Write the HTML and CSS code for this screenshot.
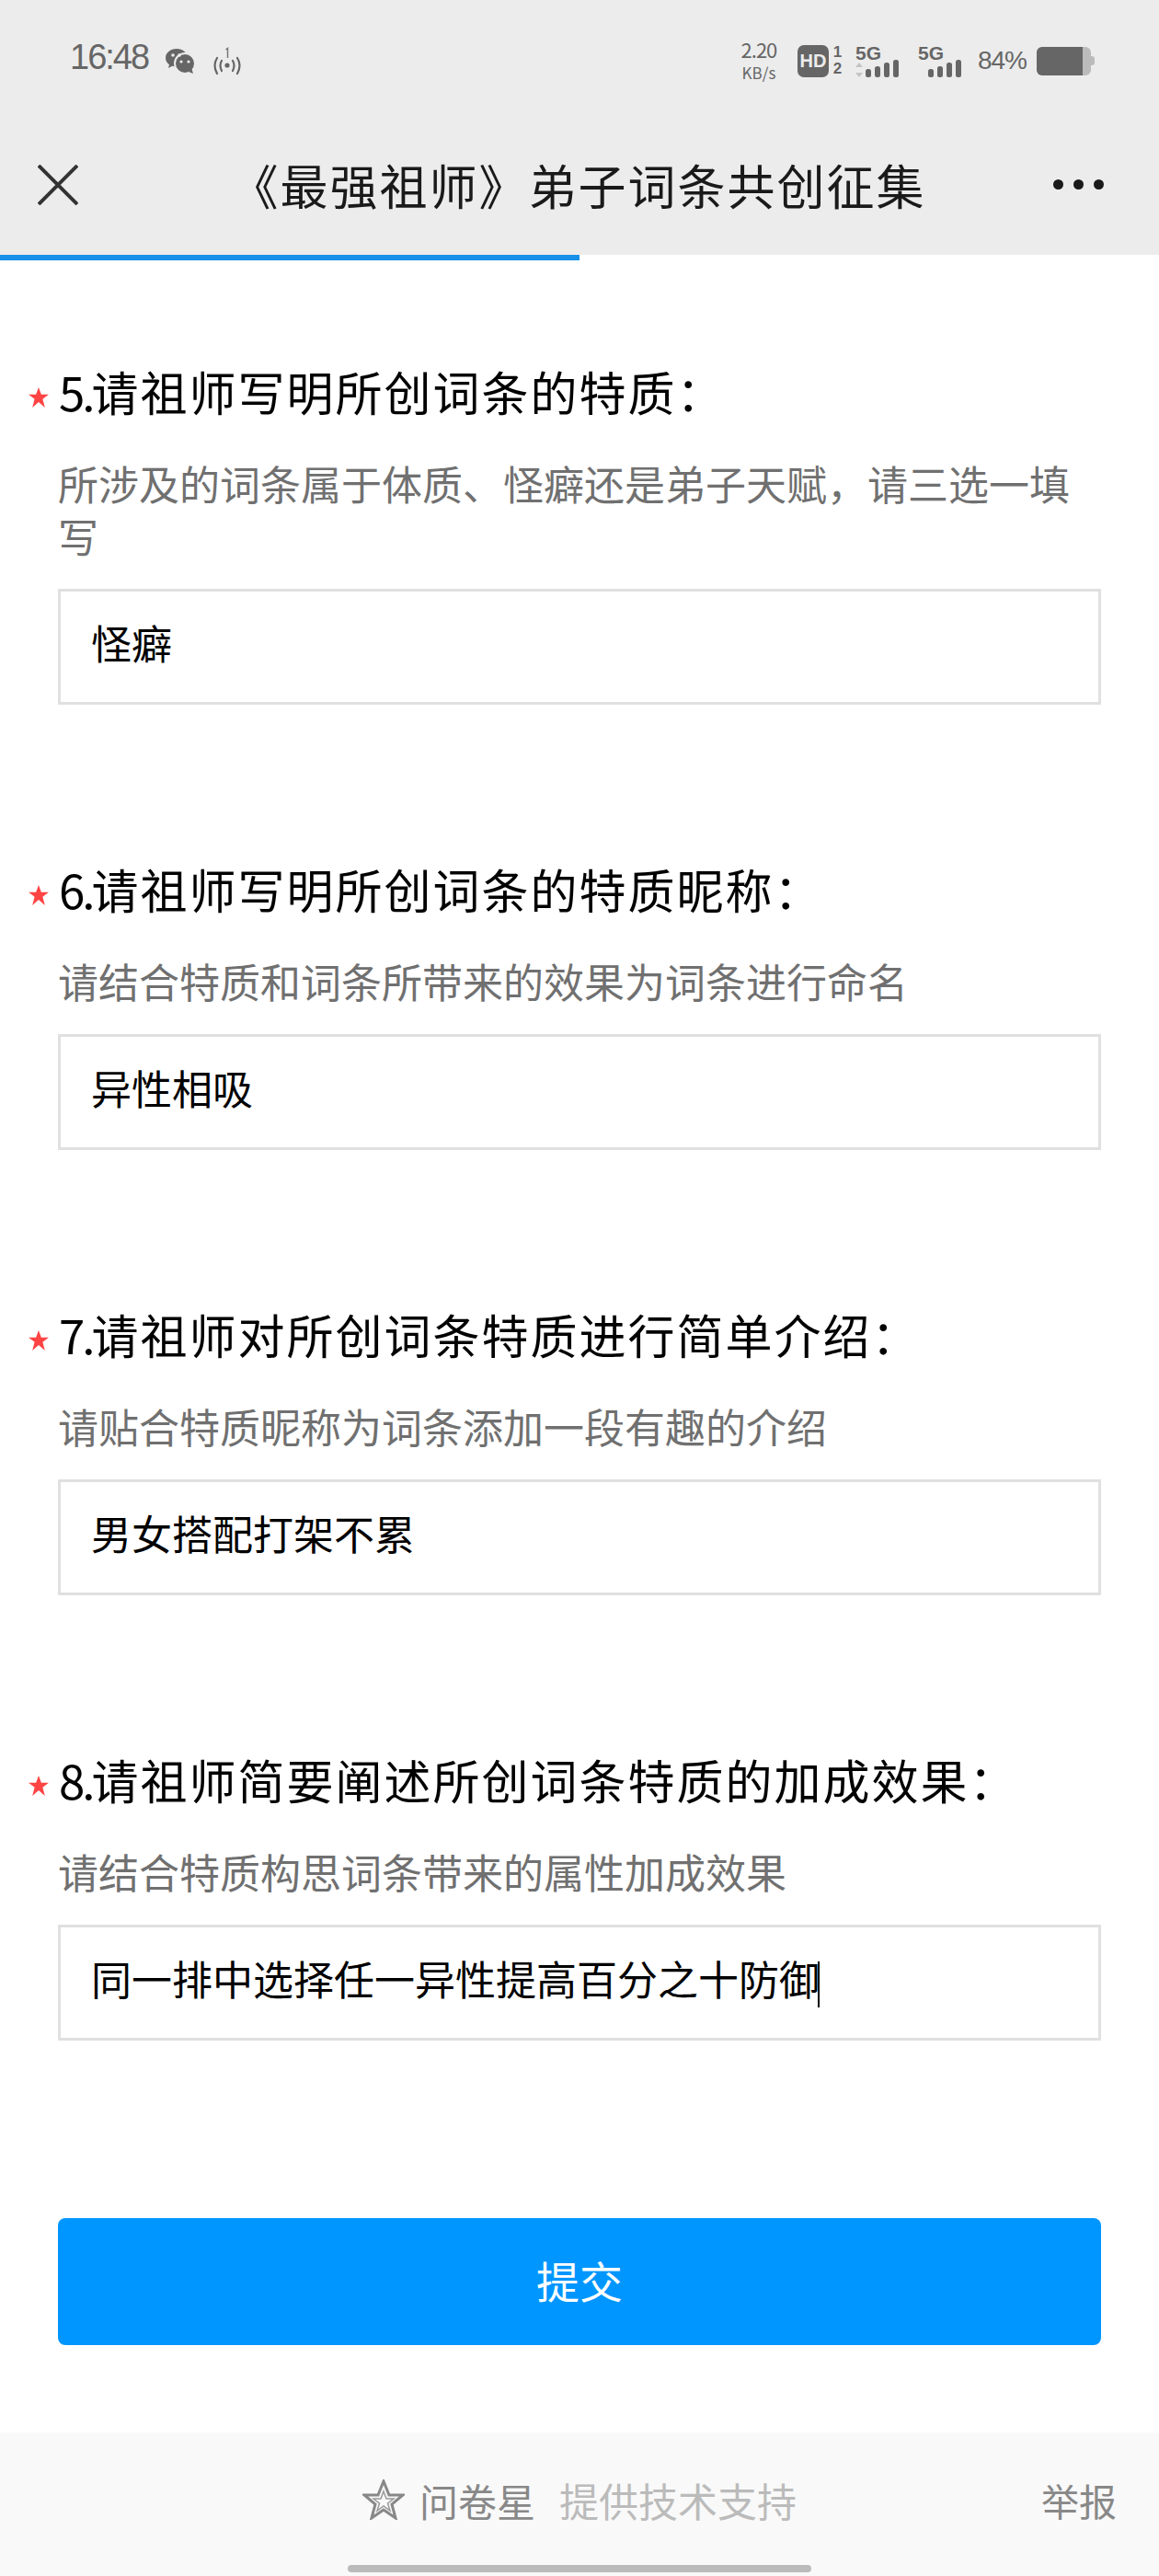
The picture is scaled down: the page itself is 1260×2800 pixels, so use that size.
FILE: index.html
```html
<!DOCTYPE html>
<html lang="zh-CN">
<head>
    <meta charset="UTF-8">
    <meta name="viewport" content="width=device-width, initial-scale=1.0">
    <title>《最强祖师》弟子词条共创征集</title>
    <link rel="stylesheet" href="styles.css">
</head>
<body>
    <header class="top">
        <div class="status">
            <div class="status-left">
                <span class="time">16:48</span>
                <svg class="icon-wechat" width="34" height="28" viewBox="0 0 34 28">
                    <path d="M13 1C6 1 1 5.500 1 11c0 3 1.500 5.500 4 7.300L4 22l4.300-2.200c1.500.4 3 .6 4.700.6 7 0 12-4.300 12-9.400S20 1 13 1z" fill="#666"/>
                    <circle cx="22" cy="17" r="11" fill="#666" stroke="#ececec" stroke-width="2"/>
                    <path d="M26 26l5 2-1.500-5z" fill="#666"/>
                    <circle cx="9" cy="8" r="1.800" fill="#ececec"/>
                    <circle cx="16" cy="8" r="1.800" fill="#ececec"/>
                    <circle cx="18" cy="15" r="1.600" fill="#ececec"/>
                    <circle cx="26" cy="15" r="1.600" fill="#ececec"/>
                </svg>
                <svg class="icon-hotspot" width="38" height="34" viewBox="0 0 38 34">
                    <path d="M8 12q-5 8 0 17M13 15q-3 5 0 11M30 12q5 8 0 17M25 15q3 5 0 11" fill="none" stroke="#666" stroke-width="2.200" stroke-linecap="round"/>
                    <circle cx="19" cy="20" r="2.600" fill="#666"/>
                    <path d="M17.500 3l2-1.500V12" fill="none" stroke="#777" stroke-width="1.500"/>
                </svg>
            </div>
            <div class="status-right">
                <div class="speed"><span>2.20</span><span class="speed-unit">KB/s</span></div>
                <div class="hd">HD</div>
                <div class="sim"><span>1</span><span>2</span></div>
                <svg class="icon-signal first" width="53" height="40" viewBox="0 0 53 40">
                    <text x="0" y="20" class="net-label">5G</text>
                    <path d="M4 23l4 5H0zM4 39l4-5H0z" fill="#c4c4c4"/>
                    <rect x="11" y="30" width="6" height="9" rx="2.500" fill="#666"/>
                    <rect x="21" y="27" width="6" height="12" rx="2.500" fill="#666"/>
                    <rect x="31" y="23" width="6" height="16" rx="2.500" fill="#666"/>
                    <rect x="41" y="20" width="6" height="19" rx="2.500" fill="#666"/>
                </svg>
                <svg class="icon-signal" width="53" height="40" viewBox="0 0 53 40">
                    <text x="0" y="20" class="net-label">5G</text>
                    <rect x="11" y="30" width="6" height="9" rx="2.500" fill="#666"/>
                    <rect x="21" y="27" width="6" height="12" rx="2.500" fill="#666"/>
                    <rect x="31" y="23" width="6" height="16" rx="2.500" fill="#666"/>
                    <rect x="41" y="20" width="6" height="19" rx="2.500" fill="#666"/>
                </svg>
                <span class="percent">84%</span>
                <div class="battery"><div class="battery-level"></div></div>
            </div>
        </div>
        <nav class="nav">
            <svg class="icon-close" width="44" height="44" viewBox="0 0 44 44">
                <path d="M1 1l42 42M43 1L1 43" fill="none" stroke="#333" stroke-width="4"/>
            </svg>
            <h1 class="nav-title">《最强祖师》弟子词条共创征集</h1>
            <div class="nav-more"><i></i><i></i><i></i></div>
        </nav>
    </header>
    <div class="progress"></div>

    <main class="form">
        <section class="question">
            <h2 class="q-title"><svg class="star" width="22" height="22" viewBox="0 0 20 20"><path d="M10 0l2.600 7H20l-6 4.500L16.200 20 10 14.600 3.800 20 6 11.500 0 7h7.400z"/></svg><span class="q-num">5.</span>请祖师写明所创词条的特质：</h2>
            <p class="q-hint">所涉及的词条属于体质、怪癖还是弟子天赋，请三选一填写</p>
            <div class="answer">怪癖</div>
        </section>
        <section class="question">
            <h2 class="q-title"><svg class="star" width="22" height="22" viewBox="0 0 20 20"><path d="M10 0l2.600 7H20l-6 4.500L16.200 20 10 14.600 3.800 20 6 11.500 0 7h7.400z"/></svg><span class="q-num">6.</span>请祖师写明所创词条的特质昵称：</h2>
            <p class="q-hint">请结合特质和词条所带来的效果为词条进行命名</p>
            <div class="answer">异性相吸</div>
        </section>
        <section class="question">
            <h2 class="q-title"><svg class="star" width="22" height="22" viewBox="0 0 20 20"><path d="M10 0l2.600 7H20l-6 4.500L16.200 20 10 14.600 3.800 20 6 11.500 0 7h7.400z"/></svg><span class="q-num">7.</span>请祖师对所创词条特质进行简单介绍：</h2>
            <p class="q-hint">请贴合特质昵称为词条添加一段有趣的介绍</p>
            <div class="answer">男女搭配打架不累</div>
        </section>
        <section class="question">
            <h2 class="q-title"><svg class="star" width="22" height="22" viewBox="0 0 20 20"><path d="M10 0l2.600 7H20l-6 4.500L16.200 20 10 14.600 3.800 20 6 11.500 0 7h7.400z"/></svg><span class="q-num">8.</span>请祖师简要阐述所创词条特质的加成效果：</h2>
            <p class="q-hint">请结合特质构思词条带来的属性加成效果</p>
            <div class="answer">同一排中选择任一异性提高百分之十防御<span class="caret"></span></div>
        </section>
        <button class="submit">提交</button>
    </main>

    <footer class="footer">
        <div></div>
        <div class="brand">
            <svg class="icon-star" width="46" height="44" viewBox="0 0 46 44">
                <path d="M23 2l6 15h15L32 27l4 15-13-9-13 9 4-15L2 17h15z" fill="none" stroke="#888" stroke-width="3"/>
                <path d="M23 13l3 8h8l-6.500 5 2.500 8-7-5-7 5 2.500-8L12 21h8z" fill="none" stroke="#999" stroke-width="1.500"/>
            </svg>
            <span class="brand-name">问卷星</span>
            <span class="brand-note">提供技术支持</span>
        </div>
        <a class="report">举报</a>
    </footer>
    <div class="home-bar"></div>
</body>
</html>
```

FILE: styles.css
```css
* {
    box-sizing: border-box;
}

body {
    margin: 0;
    width: 1260px;
    height: 2800px;
    overflow: hidden;
    background: #fff;
    font-family: "Noto Sans CJK SC", "Liberation Sans", sans-serif;
}

.top {
    height: 277px;
    background: #ececec;
}

.status {
    height: 124px;
    display: flex;
    align-items: center;
    justify-content: space-between;
    padding: 8px 74px 0 76px;
    color: #666;
}

.status-left,
.status-right {
    display: flex;
    align-items: center;
}

.time {
    font-family: "Liberation Sans", sans-serif;
    font-size: 38px;
    letter-spacing: -2px;
    line-height: 1;
    margin-top: -8px;
}

.icon-wechat {
    margin-left: 18px;
}

.icon-hotspot {
    margin-left: 15px;
    margin-top: 4px;
}

.speed {
    display: flex;
    flex-direction: column;
    align-items: center;
    width: 42px;
    font-size: 22px;
    line-height: 25px;
    letter-spacing: -1px;
}

.speed-unit {
    font-size: 17px;
    letter-spacing: 0;
}

.hd {
    width: 34px;
    height: 35px;
    margin-left: 21px;
    background: #666;
    border-radius: 7px;
    color: #ececec;
    font-family: "Liberation Sans", sans-serif;
    font-size: 20px;
    font-weight: bold;
    line-height: 35px;
    text-align: center;
}

.sim {
    display: flex;
    flex-direction: column;
    width: 15px;
    margin-left: 2px;
    font-family: "Liberation Sans", sans-serif;
    font-size: 17px;
    font-weight: bold;
    line-height: 18px;
    text-align: center;
}

.icon-signal {
    margin-left: 15px;
    margin-top: -3px;
}

.icon-signal.first {
    margin-left: 12px;
}

.net-label {
    font-family: "Liberation Sans", sans-serif;
    font-size: 21px;
    font-weight: bold;
    fill: #666;
}

.percent {
    margin-left: 12px;
    font-family: "Liberation Sans", sans-serif;
    font-size: 28px;
    letter-spacing: -1px;
}

.battery {
    position: relative;
    width: 59px;
    height: 31px;
    margin-left: 11px;
    background: #bbb;
    border-radius: 6px;
}

.battery::after {
    content: "";
    position: absolute;
    top: 10px;
    right: -4px;
    width: 4px;
    height: 10px;
    background: #bbb;
    border-radius: 0 3px 3px 0;
}

.battery-level {
    width: 50px;
    height: 100%;
    background: #666;
    border-radius: 6px 0 0 6px;
}

.nav {
    height: 153px;
    display: grid;
    grid-template-columns: 1fr auto 1fr;
    align-items: center;
    padding: 0 60px 0 41px;
}

.nav-title {
    margin: 0 0 0 16px;
    font-size: 52px;
    font-weight: 400;
    letter-spacing: 2px;
    color: #1a1a1a;
    white-space: nowrap;
}

.nav-more {
    display: flex;
    justify-content: flex-end;
    gap: 11px;
}

.nav-more i {
    width: 11px;
    height: 11px;
    background: #1a1a1a;
    border-radius: 50%;
}

.progress {
    width: 630px;
    height: 6px;
    background: #1890e8;
}

.form {
    padding: 112px 63px 0;
}

.question {
    margin-bottom: 170px;
}

.q-title {
    display: flex;
    align-items: center;
    margin: 0 0 42px -32px;
    height: 60px;
    font-size: 51px;
    font-weight: 400;
    line-height: 60px;
    letter-spacing: 2px;
    color: #000;
    white-space: nowrap;
}

.q-num {
    letter-spacing: -3px;
    margin-right: -1px;
}

.star {
    flex: none;
    margin: 14px 11px 0 0;
    fill: #f44;
}

.q-hint {
    margin: 0 0 29px;
    font-size: 44px;
    line-height: 57px;
    color: #707070;
}

.answer {
    height: 126px;
    padding: 0 33px;
    border: 3px solid #e0e0e0;
    font-size: 44px;
    line-height: 111px;
    color: #000;
}

.caret {
    display: inline-block;
    width: 2px;
    height: 50px;
    margin-left: -2px;
    vertical-align: middle;
    background: #000;
}

.submit {
    display: block;
    width: 100%;
    height: 138px;
    margin-top: 193px;
    border: none;
    border-radius: 8px;
    background: #0096ff;
    color: #fff;
    font-family: inherit;
    font-size: 47px;
    padding-bottom: 6px;
}

.footer {
    position: absolute;
    top: 2644px;
    left: 0;
    width: 1260px;
    height: 156px;
    display: grid;
    grid-template-columns: 1fr auto 1fr;
    align-items: center;
    padding-bottom: 10px;
    background: #f9f9f9;
}

.brand {
    display: flex;
    align-items: center;
}

.brand-name {
    margin-left: 16px;
    font-size: 42px;
    color: #888;
}

.brand-note {
    margin-left: 26px;
    font-size: 43px;
    color: #bbb;
}

.report {
    justify-self: end;
    margin-right: 46px;
    font-size: 41px;
    color: #888;
}

.home-bar {
    position: absolute;
    top: 2788px;
    left: 378px;
    width: 504px;
    height: 8px;
    background: #bbb;
    border-radius: 4px;
}
```
